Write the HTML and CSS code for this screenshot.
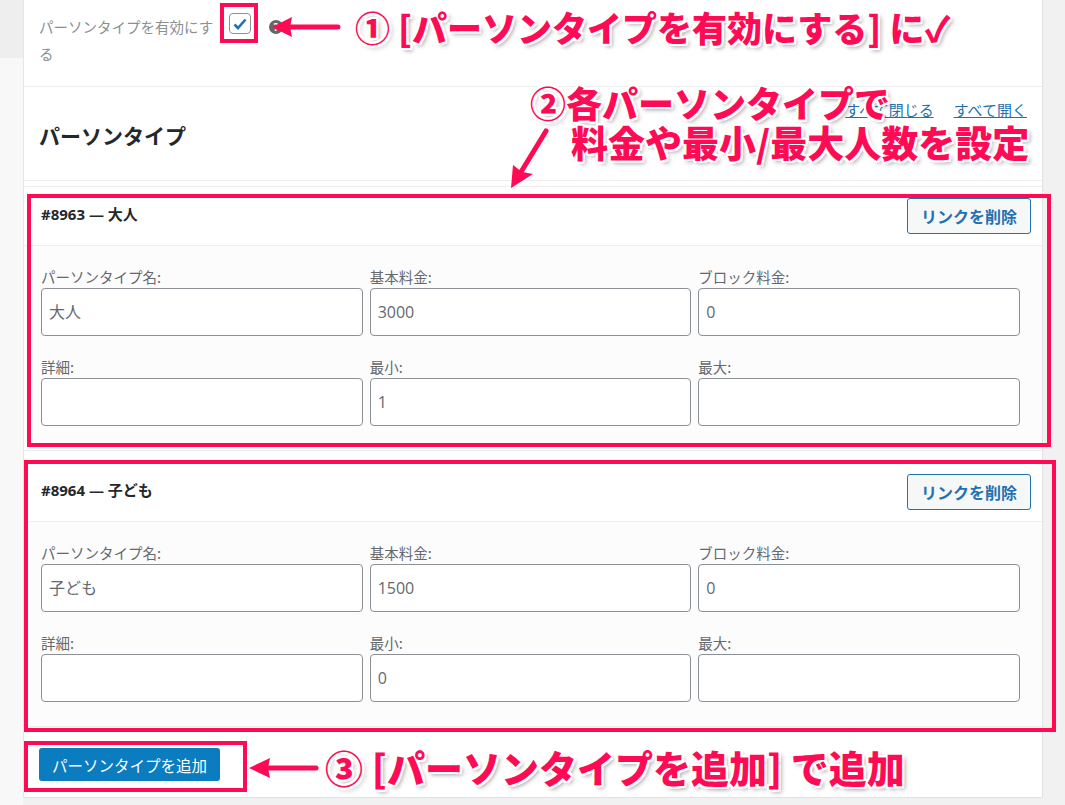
FILE: index.html
```html
<!DOCTYPE html>
<html lang="ja">
<head>
    <meta charset="UTF-8">
    <title>パーソンタイプ</title>

    <link rel="stylesheet" href="styles.css">
</head>
<body>

<div class="page">
    <div class="side">
        <div class="side__top"></div>
    </div>

    <div class="panel">
        <div class="enable">
            <label class="enable__label" for="hasPersons">パーソンタイプを有効にする</label>
            <span class="check" id="hasPersons">
                <svg width="14" height="12" viewBox="0 0 14 12"><path d="M1.5 6.5 L5 10 L12.5 1.5" fill="none" stroke="#2271b1" stroke-width="2.6"/></svg>
            </span>
            <span class="help">?</span>
        </div>

        <div class="persons">
            <h2 class="persons__title">パーソンタイプ</h2>
            <div class="persons__links">
                <a href="#" class="link">すべて閉じる</a>
                <a href="#" class="link">すべて開く</a>
            </div>
        </div>

        <div class="items">
            <div class="item">
                <div class="item__head">
                    <strong class="item__name">#8963 — 大人</strong>
                    <button type="button" class="btn-unlink">リンクを削除</button>
                </div>
                <div class="item__body">
                    <div class="field">
                        <label class="field__label">パーソンタイプ名:</label>
                        <div class="field__input">大人</div>
                    </div>
                    <div class="field">
                        <label class="field__label">基本料金:</label>
                        <div class="field__input">3000</div>
                    </div>
                    <div class="field">
                        <label class="field__label">ブロック料金:</label>
                        <div class="field__input">0</div>
                    </div>
                    <div class="field">
                        <label class="field__label">詳細:</label>
                        <div class="field__input"></div>
                    </div>
                    <div class="field">
                        <label class="field__label">最小:</label>
                        <div class="field__input">1</div>
                    </div>
                    <div class="field">
                        <label class="field__label">最大:</label>
                        <div class="field__input"></div>
                    </div>
                </div>
            </div>

            <div class="item">
                <div class="item__head">
                    <strong class="item__name">#8964 — 子ども</strong>
                    <button type="button" class="btn-unlink">リンクを削除</button>
                </div>
                <div class="item__body">
                    <div class="field">
                        <label class="field__label">パーソンタイプ名:</label>
                        <div class="field__input">子ども</div>
                    </div>
                    <div class="field">
                        <label class="field__label">基本料金:</label>
                        <div class="field__input">1500</div>
                    </div>
                    <div class="field">
                        <label class="field__label">ブロック料金:</label>
                        <div class="field__input">0</div>
                    </div>
                    <div class="field">
                        <label class="field__label">詳細:</label>
                        <div class="field__input"></div>
                    </div>
                    <div class="field">
                        <label class="field__label">最小:</label>
                        <div class="field__input">0</div>
                    </div>
                    <div class="field">
                        <label class="field__label">最大:</label>
                        <div class="field__input"></div>
                    </div>
                </div>
            </div>
        </div>

        <div class="toolbar">
            <button type="button" class="btn-add">パーソンタイプを追加</button>
        </div>
    </div>
</div>

<!-- annotations -->
<svg class="marks" width="1065" height="805" viewBox="0 0 1065 805">
    <g fill="none" stroke="#ff0a54" stroke-width="4">
        <rect x="222" y="5" width="34" height="36"/>
        <rect x="29" y="196" width="1020" height="249"/>
        <rect x="26" y="462" width="1028" height="268"/>
        <rect x="26" y="743" width="219" height="47"/>
    </g>
    <g stroke="#ff0a54" stroke-width="5" stroke-linecap="round" fill="#ff0a54">
        <line x1="338" y1="27" x2="288" y2="27"/>
        <polygon points="272,27 292,17 290,27 292,37" stroke="none"/>
        <line x1="316" y1="768" x2="268" y2="768"/>
        <polygon points="249,768 270,758 268,768 270,778" stroke="none"/>
        <line x1="546" y1="131" x2="521" y2="172"/>
        <polygon points="511,188 513,165 522,172 533,174" stroke="none"/>
    </g>
</svg>

<div class="note note--one">① [パーソンタイプを有効にする] に✓</div>
<div class="note note--two">②各パーソンタイプで</div>
<div class="note note--three">料金や最小/最大人数を設定</div>
<div class="note note--four">③ [パーソンタイプを追加] で追加</div>

</body>
</html>
```

FILE: styles.css
```css
body{
    margin: 0;
    background-color: #f1f1f1;
    font-family: "Open Sans", "Noto Sans CJK JP", sans-serif;
    font-size: 15px;
    color: #3c434a;
}
.page{
    display: flex;
    width: 1065px;
    height: 805px;
    overflow: hidden;
}
.side{
    width: 23px;
    background-color: #f8f8f8;
}
.side__top{
    height: 58px;
    background-color: #eeeeee;
}
.panel{
    width: 1018px;
    height: 797px;
    background-color: #fff;
    border-left: 1px solid #e6e6e6;
    border-right: 1px solid #e2e2e2;
    border-bottom: 1px solid #e2e2e2;
    display: flex;
    flex-direction: column;
}
.enable{
    display: flex;
    align-items: flex-start;
    height: 87px;
    padding: 0 15px;
    border-bottom: 1px solid #eeeeee;
    box-sizing: border-box;
}
.enable__label{
    width: 185px;
    margin-top: 13px;
    line-height: 27px;
    font-size: 14.5px;
    color: #8a8f94;
    font-family: "Noto Sans CJK JP", sans-serif;
}
.check{
    width: 20px;
    height: 19px;
    margin: 13px 0 0 5px;
    border: 1px solid #8c8f94;
    border-radius: 4px;
    display: flex;
    align-items: center;
    justify-content: center;
}
.help{
    width: 14px;
    height: 14px;
    margin: 20px 0 0 18px;
    border-radius: 50%;
    background-color: #666;
    color: #fff;
    font-size: 10px;
    line-height: 14px;
    text-align: center;
    font-weight: bold;
}
.persons{
    display: flex;
    justify-content: space-between;
    align-items: flex-start;
    height: 94px;
    padding: 0 15px;
    border-bottom: 1px solid #eeeeee;
    box-sizing: border-box;
}
.persons__title{
    margin: 33px 0 0;
    font-size: 21px;
    font-family: "Noto Sans CJK JP", sans-serif;
    font-weight: bold;
    color: #23282d;
}
.persons__links{
    display: flex;
    gap: 20px;
    margin-top: 12px;
    font-family: "Noto Sans CJK JP", sans-serif;
}
.link{
    color: #2271b1;
}
.items{
    padding-top: 5px;
    display: flex;
    flex-direction: column;
    gap: 11px;
}
.item{
    border-top: 1px solid #eeeeee;
    border-bottom: 1px solid #eeeeee;
}
.item__head{
    display: flex;
    justify-content: space-between;
    align-items: center;
    padding: 11px 11px 11px 17px;
    border-bottom: 1px solid #eeeeee;
}
.item__name{
    font-size: 15px;
    color: #23282d;
    font-family: "Open Sans", "Noto Sans CJK JP", sans-serif;
    font-weight: bold;
    margin-top: -6px;
}
.btn-unlink{
    height: 36px;
    padding: 0 13px;
    background-color: #f6f7f7;
    border: 1px solid #2271b1;
    border-radius: 3px;
    color: #2271b1;
    font-family: "Noto Sans CJK JP", sans-serif;
    font-size: 16px;
    font-weight: bold;
}
.item__body{
    display: grid;
    grid-template-columns: 1fr 1fr 1fr;
    column-gap: 7px;
    row-gap: 20px;
    padding: 20px 22px 24px 17px;
    background-color: #fcfcfc;
}
.field__label{
    display: block;
    line-height: 22px;
    color: #646970;
    font-family: "Noto Sans CJK JP", sans-serif;
    font-size: 14.5px;
}
.field__input{
    height: 48px;
    box-sizing: border-box;
    border: 1px solid #8c8f94;
    border-radius: 4px;
    background-color: #fff;
    padding: 0 7px;
    line-height: 46px;
    color: #646970;
    font-size: 16px;
}
.toolbar{
    padding: 21px 15px 0;
}
.btn-add{
    height: 33px;
    padding: 0 13px;
    background-color: #0a7cbf;
    border: none;
    border-radius: 3px;
    color: #fff;
    font-family: "Noto Sans CJK JP", sans-serif;
    font-size: 15.5px;
}
.marks{
    position: absolute;
    left: 0;
    top: 0;
}
.note{
    position: absolute;
    white-space: nowrap;
    font-family: "Noto Sans CJK JP", sans-serif;
    font-weight: 900;
    color: #ff0a54;
    line-height: 1;
    text-shadow:
        2px 0 0 #fff, -2px 0 0 #fff, 0 2px 0 #fff, 0 -2px 0 #fff,
        2px 2px 0 #fff, -2px -2px 0 #fff, 2px -2px 0 #fff, -2px 2px 0 #fff,
        3px 3px 4px rgba(0, 0, 0, 0.35);
}
.note--one{
    left: 355px;
    top: 9px;
    font-size: 35px;
}
.note--two{
    left: 530px;
    top: 84px;
    font-size: 36px;
}
.note--three{
    left: 571px;
    top: 124px;
    font-size: 37px;
}
.note--four{
    left: 325px;
    top: 748px;
    font-size: 38px;
}
```
